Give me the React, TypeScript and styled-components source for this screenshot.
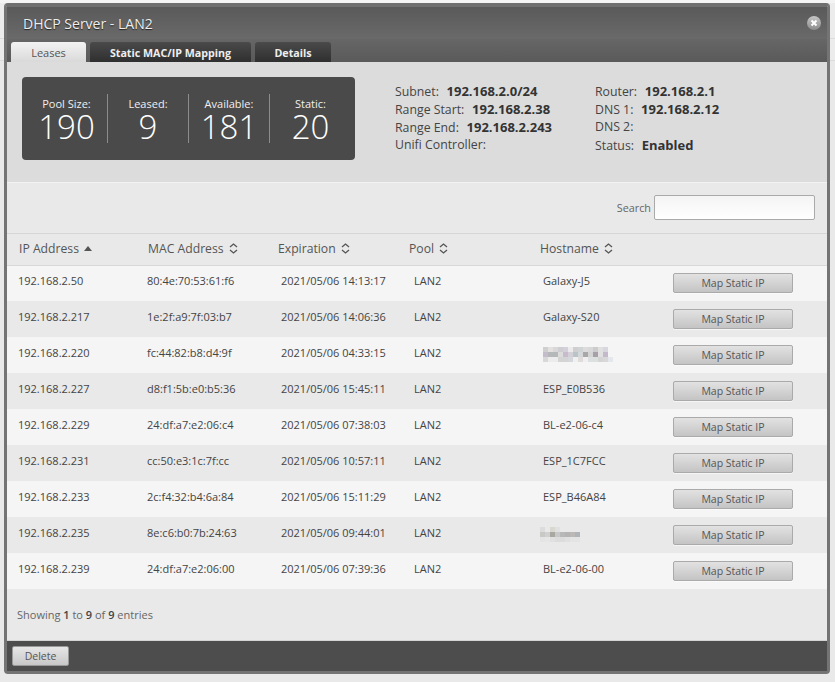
import React from "react";
import styled, { createGlobalStyle } from "styled-components";

const Global = createGlobalStyle`
  html, body { margin: 0; padding: 0; background: #e9e9e9; }
  body { font-family: "Open Sans", "Noto Sans", sans-serif; color: #444; }
  * { box-sizing: border-box; }
`;
const Page = styled.div`
  width: 835px; height: 682px; padding: 3px 5px 0 4px; overflow: hidden;
  background: linear-gradient(#f4f4f4 0 3px, #ececec 3px 38px, #dcdcdc 38px 39px, #ececec 39px 60px, #dcdcdc 60px 61px, #e9e9e9 61px);
`;
const Modal = styled.div`
  width: 826px; height: 671px; display: flex; flex-direction: column;
  border: 3px solid #747474; border-top: 4px solid #6f6f6f; border-radius: 4px;
  background: #e9e9e9;
`;
const TitleBar = styled.div`
  height: 32px; flex: none; display: flex; align-items: center; justify-content: space-between;
  padding: 0 6px 0 16px;
  background: linear-gradient(#5a5a5a, #6a6a6a);
`;
const Title = styled.h1`
  margin: 0; font-size: 14px; font-weight: 400; color: #eee; text-shadow: 0 1px 1px #222;
`;
const Close = styled.span`
  width: 14px; height: 14px; border-radius: 50%; display: flex; align-items: center; justify-content: center;
  background: linear-gradient(#c6c6c6, #8c8c8c);
`;
const TabBar = styled.div`
  height: 23px; flex: none; display: flex; align-items: flex-end; gap: 4px; padding-left: 4px;
  background: linear-gradient(#666, #5a5a5a);
`;
const Tab = styled.div<{ $active?: boolean; $w: number }>`
  height: 20px; display: flex; align-items: center; justify-content: center;
  border-radius: 3px 3px 0 0; padding-top: 1px;
  font-size: ${(p) => (p.$active ? 11 : 10.7)}px;
  width: ${(p) => p.$w}px;
  font-weight: ${(p) => (p.$active ? 400 : 700)};
  color: ${(p) => (p.$active ? "#555" : "#eee")};
  background: ${(p) => (p.$active ? "linear-gradient(#f3f3f3, #d9d9d9)" : "linear-gradient(#4a4a4a, #2f2f2f)")};
`;
const Info = styled.section`
  height: 121px; flex: none; display: flex; background: #dcdcdc; padding: 15px 0 0 15px;
  border-bottom: 1px solid #f2f2f2;
`;
const Stats = styled.div`
  width: 333px; height: 83px; display: flex; align-items: center;
  background: #4a4a4a; border-radius: 4px; color: #fff;
`;
const Stat = styled.div<{ $w: number; $pl?: number }>`
  width: ${(p) => p.$w}px; height: 49px; display: flex; flex-direction: column; align-items: center;
  padding-left: ${(p) => p.$pl ?? 0}px;
  border-right: 1px solid #8c8c8c;
  &:last-child { border-right: 0; }
`;
const StatLabel = styled.div`
  font-size: 11px; line-height: 13px; margin-top: 3px; color: #f0f0f0;
`;
const StatValue = styled.div`
  font-size: 33px; line-height: 29px; margin-top: 2px; font-weight: 300;
`;
const InfoCol = styled.div<{ $w: number; $ml: number }>`
  width: ${(p) => p.$w}px; margin-left: ${(p) => p.$ml}px; margin-top: 5px;
`;
const InfoRow = styled.div`
  font-size: 12.3px; line-height: 18px; height: 18px; color: #444; white-space: nowrap;
  b { font-size: 13px; font-weight: 700; color: #333; margin-left: 4.5px; }
`;
const SearchRow = styled.div`
  height: 51px; flex: none; display: flex; align-items: center; justify-content: flex-end; gap: 3px;
  padding: 0 12px 2px 0; border-bottom: 1px solid #d6d6d6;
`;
const SearchLabel = styled.label`
  font-size: 10.8px; color: #666;
`;
const SearchInput = styled.input`
  width: 161px; height: 25px; border: 1px solid #aaa; border-radius: 2px; background: linear-gradient(#f4f4f4, #fff);
`;
const Table = styled.table`
  width: 820px; border-collapse: collapse; table-layout: fixed; flex: none;
`;
const Head = styled.th<{ $w: number; $pl: number }>`
  width: ${(p) => p.$w}px; height: 31px; padding: 0 0 2px ${(p) => p.$pl}px; text-align: left;
  font-size: 12.2px; font-weight: 400; color: #555; border-bottom: 1px solid #d8d8d8;
`;
const HeadInner = styled.span`
  display: inline-flex; align-items: center; gap: 5px;
`;
const Row = styled.tr`
  height: 36px;
  background: #f5f5f5;
  &:nth-child(even) { background: #e9e9e9; }
`;
const Cell = styled.td<{ $pl: number }>`
  padding: 0 0 6px ${(p) => p.$pl}px; font-size: 11px; color: #444; white-space: nowrap; vertical-align: middle;
`;
const ButtonCell = styled.td`
  padding: 0 0 0 12px; vertical-align: middle;
`;
const MapButton = styled.button`
  display: block; width: 120px; height: 20px; padding: 0; border: 1px solid #aaa; border-radius: 2px;
  font: 400 10.5px "Open Sans", sans-serif;
  color: #555; background: linear-gradient(#e2e2e2, #c4c4c4); box-shadow: 0 1px 0 #fff8;
`;
const Summary = styled.div`
  flex: 1; display: flex; align-items: center; padding: 0 0 1px 10px; font-size: 11px; color: #666;
  b { font-weight: 600; color: #444; }
`;
const Footer = styled.div`
  height: 31px; flex: none; display: flex; align-items: center; padding: 0 5px; background: #4d4d4d;
  border-top: 1px solid #d4d4d4;
`;
const DeleteButton = styled.button`
  width: 57px; height: 20px; padding: 0; border: 1px solid #999; border-radius: 2px;
  font: 400 10.5px "Open Sans", sans-serif;
  color: #555; background: linear-gradient(#e6e6e6, #c8c8c8);
`;
const Mosaic = styled.svg<{ $ml: number }>`
  display: block; margin: 2px 0 -2px ${(p) => p.$ml}px;
`;

const SortBoth = () => (
  <svg width="9" height="11" viewBox="0 0 9 11" fill="none" stroke="#555" strokeWidth="1.3">
    <path d="M1 4l3.5-3L8 4M1 7l3.5 3L8 7" />
  </svg>
);
const SortUp = () => (
  <svg width="8" height="5" viewBox="0 0 8 5" fill="#555"><path d="M0 5l4-5 4 5z" /></svg>
);

const mosaicA = [
  ["#cfcfcf", "#e4e0e0", "#d8d8d8", "#cfcdd2", "#d2d0d8", "#eceaea", "#cfcfcf", "#d0d4d4", "#dcdcdc", "#d8d8d8", "#cccccc", "#e0e0e0", "#d8d6de"],
  ["#c4bcc8", "#b4b8b8", "#b4b8b8", "#dcdcdc", "#c8bccc", "#d4d0d8", "#b8c4c8", "#d4d8d8", "#a8a8a8", "#d4d4d4", "#a8a0a8", "#e0e0e0", "#c4b8cc"],
  ["#d8d8d8", "#ececec", "#ececec", "#d4d4d4", "#d4d4d4", "#d4d8dc", "#f0f0f0", "#e0dcdc", "#f0f0f0", "#dce0e0", "#dce0e0", "#d4d4d4", "#d8d8d8", "#e4e8ec"],
];
const mosaicB = [
  ["#dcdcdc", "none", "#d8d8d0", "#e0e0e0"],
  ["#c8c8c4", "#d0d0d0", "#a8a8a0", "#c8c8c8", "#b8b8b8", "#b4b4b4", "#bcb8b8", "#b0b4b8"],
  ["#e4e4e4", "#e6e6e6", "#e0e0e0", "#dcdcdc", "#dcdcdc", "#e0e0e0", "#e4e4e4", "#e4e4e4"],
];
const MosaicBlock = ({ cells, ml }: { cells: string[][]; ml: number }) => (
  <Mosaic $ml={ml} width={Math.max(...cells.map((r) => r.length)) * 5} height={cells.length * 5}>
    {cells.flatMap((row, y) =>
      row.map((c, x) => <rect key={`${x}-${y}`} x={x * 5} y={y * 5} width="5" height="5" fill={c} />)
    )}
  </Mosaic>
);

const rows: [string, string, string, React.ReactNode][] = [
  ["192.168.2.50", "80:4e:70:53:61:f6", "2021/05/06 14:13:17", "Galaxy-J5"],
  ["192.168.2.217", "1e:2f:a9:7f:03:b7", "2021/05/06 14:06:36", "Galaxy-S20"],
  ["192.168.2.220", "fc:44:82:b8:d4:9f", "2021/05/06 04:33:15", <MosaicBlock cells={mosaicA} ml={0} />],
  ["192.168.2.227", "d8:f1:5b:e0:b5:36", "2021/05/06 15:45:11", "ESP_E0B536"],
  ["192.168.2.229", "24:df:a7:e2:06:c4", "2021/05/06 07:38:03", "BL-e2-06-c4"],
  ["192.168.2.231", "cc:50:e3:1c:7f:cc", "2021/05/06 10:57:11", "ESP_1C7FCC"],
  ["192.168.2.233", "2c:f4:32:b4:6a:84", "2021/05/06 15:11:29", "ESP_B46A84"],
  ["192.168.2.235", "8e:c6:b0:7b:24:63", "2021/05/06 09:44:01", <MosaicBlock cells={mosaicB} ml={-3} />],
  ["192.168.2.239", "24:df:a7:e2:06:00", "2021/05/06 07:39:36", "BL-e2-06-00"],
];

const stats: [string, string, number, number][] = [
  ["Pool Size:", "190", 86, 4],
  ["Leased:", "9", 81, 0],
  ["Available:", "181", 81, 0],
  ["Static:", "20", 81, 0],
];

export default function App() {
  return (
    <Page>
      <Global />
      <Modal>
        <TitleBar>
          <Title>DHCP Server - LAN2</Title>
          <Close>
            <svg width="8" height="8" viewBox="0 0 8 8" stroke="#fff" strokeWidth="2"><path d="M1.5 1.5l5 5M6.5 1.5l-5 5" /></svg>
          </Close>
        </TitleBar>
        <TabBar>
          <Tab $active $w={75}>Leases</Tab>
          <Tab $w={161}>Static MAC/IP Mapping</Tab>
          <Tab $w={76}>Details</Tab>
        </TabBar>
        <Info>
          <Stats>
            {stats.map(([l, v, w, pl]) => (
              <Stat key={l} $w={w} $pl={pl}>
                <StatLabel>{l}</StatLabel>
                <StatValue>{v}</StatValue>
              </Stat>
            ))}
          </Stats>
          <InfoCol $w={200} $ml={40}>
            <InfoRow>Subnet: <b>192.168.2.0/24</b></InfoRow>
            <InfoRow>Range Start: <b>192.168.2.38</b></InfoRow>
            <InfoRow>Range End: <b>192.168.2.243</b></InfoRow>
            <InfoRow>Unifi Controller:</InfoRow>
          </InfoCol>
          <InfoCol $w={200} $ml={0}>
            <InfoRow>Router: <b>192.168.2.1</b></InfoRow>
            <InfoRow>DNS 1: <b>192.168.2.12</b></InfoRow>
            <InfoRow>DNS 2:</InfoRow>
            <InfoRow>Status: <b>Enabled</b></InfoRow>
          </InfoCol>
        </Info>
        <SearchRow>
          <SearchLabel>Search</SearchLabel>
          <SearchInput />
        </SearchRow>
        <Table>
          <thead>
            <tr>
              <Head $w={129} $pl={12}><HeadInner>IP Address <SortUp /></HeadInner></Head>
              <Head $w={130} $pl={12}><HeadInner>MAC Address <SortBoth /></HeadInner></Head>
              <Head $w={131} $pl={12}><HeadInner>Expiration <SortBoth /></HeadInner></Head>
              <Head $w={131} $pl={12}><HeadInner>Pool <SortBoth /></HeadInner></Head>
              <Head $w={133} $pl={12}><HeadInner>Hostname <SortBoth /></HeadInner></Head>
              <Head $w={166} $pl={0} />
            </tr>
          </thead>
          <tbody>
            {rows.map((r) => (
              <Row key={r[0]}>
                <Cell $pl={11}>{r[0]}</Cell>
                <Cell $pl={11}>{r[1]}</Cell>
                <Cell $pl={15}>{r[2]}</Cell>
                <Cell $pl={17}>LAN2</Cell>
                <Cell $pl={15}>{r[3]}</Cell>
                <ButtonCell><MapButton>Map Static IP</MapButton></ButtonCell>
              </Row>
            ))}
          </tbody>
        </Table>
        <Summary><span>Showing <b>1</b> to <b>9</b> of <b>9</b> entries</span></Summary>
        <Footer><DeleteButton>Delete</DeleteButton></Footer>
      </Modal>
    </Page>
  );
}
